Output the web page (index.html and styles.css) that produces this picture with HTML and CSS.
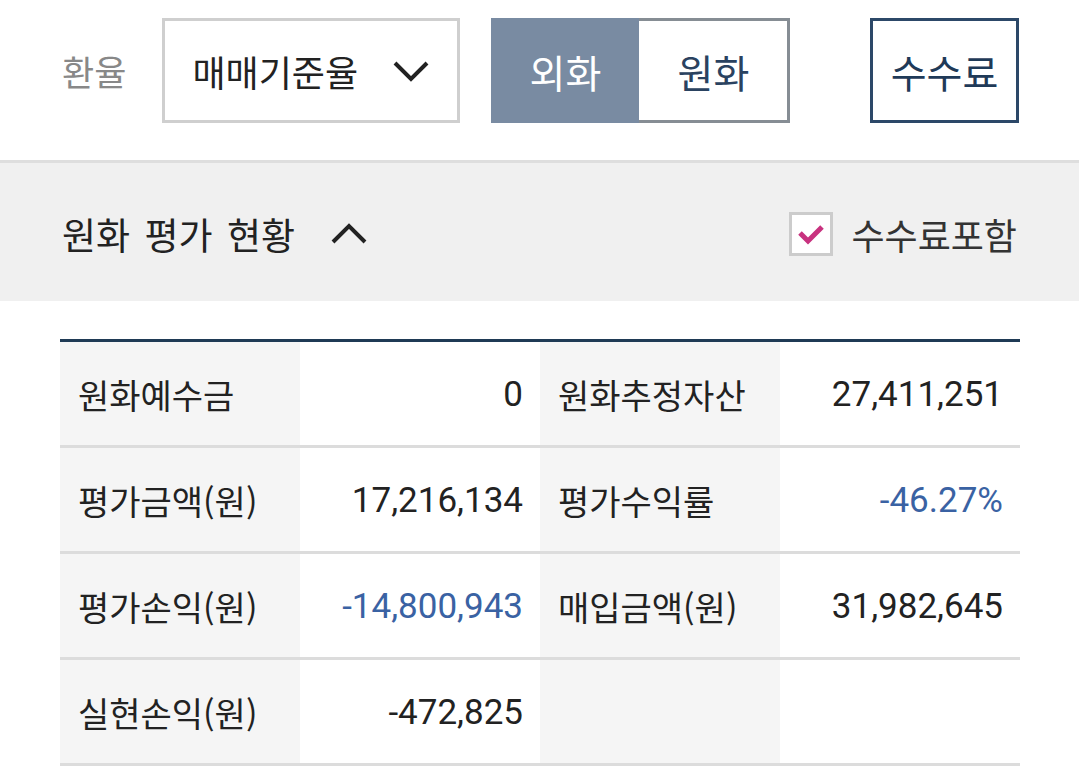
FILE: index.html
```html
<!DOCTYPE html>
<html lang="ko">
<head>
    <meta charset="UTF-8">
    <meta name="viewport" content="width=device-width, initial-scale=1.0">
    <title>원화 평가 현황</title>
    <link rel="stylesheet" href="styles.css">
</head>
<body>
    <div class="toolbar">
        <span class="rate-label">환율</span>
        <div class="rate-select">
            <span>매매기준율</span>
            <svg class="chevron" width="36" height="22" viewBox="0 0 36 22">
                <polyline points="2,3 18,19 34,3" fill="none" stroke="#222" stroke-width="4"/>
            </svg>
        </div>
        <div class="toggle">
            <button class="toggle-btn active">외화</button>
            <button class="toggle-btn">원화</button>
        </div>
        <button class="fee-btn">수수료</button>
    </div>

    <div class="section-head">
        <div class="section-title">
            <span>원화 평가 현황</span>
            <svg class="chevron" width="36" height="22" viewBox="0 0 36 22">
                <polyline points="2,19 18,3 34,19" fill="none" stroke="#222" stroke-width="4"/>
            </svg>
        </div>
        <label class="fee-check">
            <span class="box">
                <svg width="30" height="24" viewBox="0 0 30 24">
                    <polyline points="4,11 12,19 26,5" fill="none" stroke="#c8327f" stroke-width="5"/>
                </svg>
            </span>
            <span>수수료포함</span>
        </label>
    </div>

    <div class="summary">
        <div class="row">
            <div class="cell label">원화예수금</div>
            <div class="cell value">0</div>
            <div class="cell label">원화추정자산</div>
            <div class="cell value">27,411,251</div>
        </div>
        <div class="row">
            <div class="cell label">평가금액(원)</div>
            <div class="cell value">17,216,134</div>
            <div class="cell label">평가수익률</div>
            <div class="cell value minus">-46.27%</div>
        </div>
        <div class="row">
            <div class="cell label">평가손익(원)</div>
            <div class="cell value minus">-14,800,943</div>
            <div class="cell label">매입금액(원)</div>
            <div class="cell value">31,982,645</div>
        </div>
        <div class="row">
            <div class="cell label">실현손익(원)</div>
            <div class="cell value">-472,825</div>
            <div class="cell label"></div>
            <div class="cell value"></div>
        </div>
    </div>
</body>
</html>
```

FILE: styles.css
```css
body {
    margin: 0;
    padding: 0;
    background: #fff;
    font-family: "Noto Sans CJK KR", "Noto Sans", sans-serif;
    color: #222;
}

/* Top toolbar */
.toolbar {
    display: flex;
    align-items: flex-start;
    height: 160px;
    padding: 18px 60px 0 62px;
    box-sizing: border-box;
}

.rate-label {
    font-size: 35px;
    line-height: 105px;
    color: #888;
    margin-right: 36px;
}

.rate-select {
    display: flex;
    align-items: center;
    justify-content: space-between;
    width: 298px;
    height: 105px;
    box-sizing: border-box;
    border: 3px solid #cfcfcf;
    padding: 0 28px 0 27px;
    font-size: 36px;
    color: #222;
}

.toggle {
    display: flex;
    margin-left: 31px;
    width: 299px;
    height: 105px;
    box-sizing: border-box;
    border: 3px solid #868d94;
}

.toggle-btn {
    flex: 1;
    border: none;
    background: #fff;
    font-family: inherit;
    font-size: 39px;
    color: #2a4260;
    padding: 0;
}

.toggle-btn.active {
    background: #798ba2;
    color: #fff;
    margin: -3px 0 -3px -3px;
}

.fee-btn {
    margin-left: auto;
    width: 149px;
    height: 105px;
    box-sizing: border-box;
    border: 3px solid #2c4868;
    background: #fff;
    font-family: inherit;
    font-size: 39px;
    color: #1f3a58;
    padding: 0;
}

/* Section header */
.section-head {
    display: flex;
    align-items: center;
    justify-content: space-between;
    height: 141px;
    box-sizing: border-box;
    border-top: 3px solid #dedede;
    background: #f0f0f0;
    padding: 4px 62px 0 62px;
}

.section-title {
    display: flex;
    align-items: center;
    gap: 36px;
    font-size: 37px;
    word-spacing: 4px;
    color: #222;
}

.fee-check {
    display: flex;
    align-items: center;
    gap: 18px;
    font-size: 36px;
    color: #333;
}

.fee-check .box {
    display: flex;
    align-items: center;
    justify-content: center;
    width: 44px;
    height: 44px;
    box-sizing: border-box;
    border: 3px solid #cccccc;
    background: #fff;
}

/* Summary table */
.summary {
    margin: 38px 59px 0 60px;
    border-top: 3px solid #1f3a55;
}

.row {
    display: grid;
    grid-template-columns: 240px 240px 240px 240px;
    border-bottom: 3px solid #dcdcdc;
}

.cell {
    height: 103px;
    display: flex;
    align-items: center;
    box-sizing: border-box;
    padding-top: 2px;
    font-size: 34px;
}

.cell.label {
    background: #f5f5f5;
    padding-left: 18px;
    color: #222;
}

.cell.value {
    justify-content: flex-end;
    padding-right: 17px;
    font-family: Roboto, "Noto Sans CJK KR", sans-serif;
    font-size: 35px;
    color: #222;
}

.cell.value.minus {
    color: #3a62a3;
}
```
